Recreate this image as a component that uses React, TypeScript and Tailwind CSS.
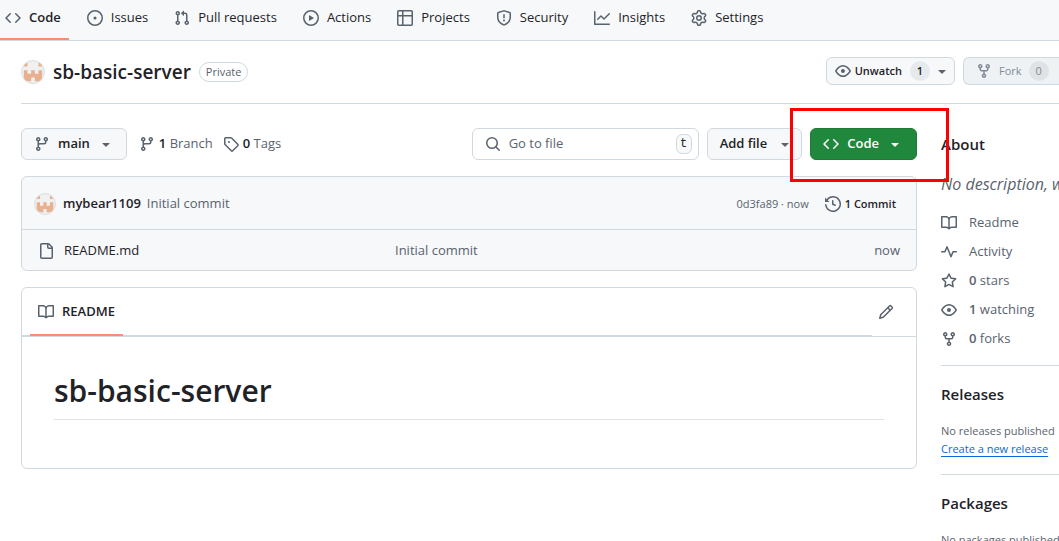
import type { ReactNode } from "react";

const icons = {
  code: "m11.28 3.22 4.25 4.25a.75.75 0 0 1 0 1.06l-4.25 4.25a.749.749 0 0 1-1.275-.326.749.749 0 0 1 .215-.734L13.94 8l-3.72-3.72a.749.749 0 0 1 .326-1.275.749.749 0 0 1 .734.215Zm-6.56 0a.751.751 0 0 1 1.042.018.751.751 0 0 1 .018 1.042L2.06 8l3.72 3.72a.749.749 0 0 1-.326 1.275.749.749 0 0 1-.734-.215L.47 8.53a.75.75 0 0 1 0-1.06Z",
  issue: "M8 9.5a1.5 1.5 0 1 0 0-3 1.5 1.5 0 0 0 0 3ZM8 0a8 8 0 1 1 0 16A8 8 0 0 1 8 0ZM1.5 8a6.5 6.5 0 1 0 13 0 6.5 6.5 0 0 0-13 0Z",
  pull: "M1.5 3.25a2.25 2.25 0 1 1 3 2.122v5.256a2.251 2.251 0 1 1-1.5 0V5.372A2.25 2.25 0 0 1 1.5 3.25Zm5.677-.177L9.573.677A.25.25 0 0 1 10 .854V2.5h1A2.5 2.5 0 0 1 13.5 5v5.628a2.251 2.251 0 1 1-1.5 0V5a1 1 0 0 0-1-1h-1v1.646a.25.25 0 0 1-.427.177L7.177 3.427a.25.25 0 0 1 0-.354ZM3.75 2.5a.75.75 0 1 0 0 1.5.75.75 0 0 0 0-1.5Zm0 9.5a.75.75 0 1 0 0 1.5.75.75 0 0 0 0-1.5Zm8.25.75a.75.75 0 1 0 1.5 0 .75.75 0 0 0-1.5 0Z",
  play: "M8 0a8 8 0 1 1 0 16A8 8 0 0 1 8 0ZM1.5 8a6.5 6.5 0 1 0 13 0 6.5 6.5 0 0 0-13 0Zm4.879-2.773 4.264 2.559a.25.25 0 0 1 0 .428l-4.264 2.559A.25.25 0 0 1 6 10.559V5.442a.25.25 0 0 1 .379-.215Z",
  table: "M0 1.75C0 .784.784 0 1.75 0h12.5C15.216 0 16 .784 16 1.75v12.5A1.75 1.75 0 0 1 14.25 16H1.75A1.75 1.75 0 0 1 0 14.25ZM6.5 6.5v8h7.75a.25.25 0 0 0 .25-.25V6.5Zm8-1.5V1.75a.25.25 0 0 0-.25-.25H6.5V5Zm-13 1.5v7.75c0 .138.112.25.25.25H5v-8ZM5 5V1.5H1.75a.25.25 0 0 0-.25.25V5Z",
  shield: "M7.467.133a1.748 1.748 0 0 1 1.066 0l5.25 1.68A1.75 1.75 0 0 1 15 3.48V7c0 1.566-.32 3.182-1.303 4.682-.983 1.498-2.585 2.813-5.032 3.855a1.697 1.697 0 0 1-1.33 0c-2.447-1.042-4.049-2.357-5.032-3.855C1.32 10.182 1 8.566 1 7V3.48a1.75 1.75 0 0 1 1.217-1.667Zm.61 1.429a.25.25 0 0 0-.153 0l-5.25 1.68a.25.25 0 0 0-.174.238V7c0 1.358.275 2.666 1.057 3.86.784 1.194 2.121 2.34 4.366 3.297a.196.196 0 0 0 .154 0c2.245-.956 3.582-2.104 4.366-3.298C13.225 9.666 13.5 8.36 13.5 7V3.48a.251.251 0 0 0-.174-.237l-5.25-1.68ZM8.75 4.75v3a.75.75 0 0 1-1.5 0v-3a.75.75 0 0 1 1.5 0ZM9 10.5a1 1 0 1 1-2 0 1 1 0 0 1 2 0Z",
  graph: "M1.5 1.75V13.5h13.75a.75.75 0 0 1 0 1.5H.75a.75.75 0 0 1-.75-.75V1.75a.75.75 0 0 1 1.5 0Zm14.28 2.53-5.25 5.25a.75.75 0 0 1-1.06 0L7 7.06 4.28 9.78a.751.751 0 0 1-1.042-.018.751.751 0 0 1-.018-1.042l3.25-3.25a.75.75 0 0 1 1.06 0L10 7.94l4.72-4.72a.751.751 0 0 1 1.042.018.751.751 0 0 1 .018 1.042Z",
  gear: "M8 0a8.2 8.2 0 0 1 .701.031C9.444.095 9.99.645 10.16 1.29l.288 1.107c.018.066.079.158.212.224.231.114.454.243.668.386.123.082.233.09.299.071l1.103-.303c.644-.176 1.392.021 1.82.63.27.385.506.792.704 1.218.315.675.111 1.422-.364 1.891l-.814.806c-.049.048-.098.147-.088.294.016.257.016.515 0 .772-.01.147.038.246.088.294l.814.806c.475.469.679 1.216.364 1.891a7.977 7.977 0 0 1-.704 1.217c-.428.61-1.176.807-1.82.63l-1.102-.302c-.067-.019-.177-.011-.3.071a5.909 5.909 0 0 1-.668.386c-.133.066-.194.158-.211.224l-.29 1.106c-.168.646-.715 1.196-1.458 1.26a8.006 8.006 0 0 1-1.402 0c-.743-.064-1.289-.614-1.458-1.26l-.289-1.106c-.018-.066-.079-.158-.212-.224a5.738 5.738 0 0 1-.668-.386c-.123-.082-.233-.09-.299-.071l-1.103.303c-.644.176-1.392-.021-1.82-.63a8.12 8.12 0 0 1-.704-1.218c-.315-.675-.111-1.422.363-1.891l.815-.806c.05-.048.098-.147.088-.294a6.214 6.214 0 0 1 0-.772c.01-.147-.038-.246-.088-.294l-.815-.806C.635 6.045.431 5.298.746 4.623a7.92 7.92 0 0 1 .704-1.217c.428-.61 1.176-.807 1.82-.63l1.102.302c.067.019.177.011.3-.071.214-.143.437-.272.668-.386.133-.066.194-.158.211-.224l.29-1.106C6.009.645 6.556.095 7.299.03 7.53.01 7.764 0 8 0Zm-.571 1.525c-.036.003-.108.036-.137.146l-.289 1.105c-.147.561-.549.967-.998 1.189-.173.086-.34.183-.5.29-.417.278-.97.423-1.529.27l-1.103-.303c-.109-.03-.175.016-.195.045-.22.312-.412.644-.573.99-.014.031-.021.11.059.19l.815.806c.411.406.562.957.53 1.456a4.709 4.709 0 0 0 0 .582c.032.499-.119 1.05-.53 1.456l-.815.806c-.081.08-.073.159-.059.19.162.346.353.677.573.989.02.03.085.076.195.046l1.102-.303c.56-.153 1.113-.008 1.53.27.161.107.328.204.501.29.447.222.85.629.997 1.189l.289 1.105c.029.109.101.143.137.146a6.6 6.6 0 0 0 1.142 0c.036-.003.108-.036.137-.146l.289-1.105c.147-.561.549-.967.998-1.189.173-.086.34-.183.5-.29.417-.278.97-.423 1.529-.27l1.103.303c.109.029.175-.016.195-.045.22-.313.411-.644.573-.99.014-.031.021-.11-.059-.19l-.815-.806c-.411-.406-.562-.957-.53-1.456a4.709 4.709 0 0 0 0-.582c-.032-.499.119-1.05.53-1.456l.815-.806c.081-.08.073-.159.059-.19a6.464 6.464 0 0 0-.573-.989c-.02-.03-.085-.076-.195-.046l-1.102.303c-.56.153-1.113.008-1.53-.27a4.44 4.44 0 0 0-.501-.29c-.447-.222-.85-.629-.997-1.189l-.289-1.105c-.029-.11-.101-.143-.137-.146a6.6 6.6 0 0 0-1.142 0ZM11 8a3 3 0 1 1-6 0 3 3 0 0 1 6 0ZM9.5 8a1.5 1.5 0 1 0-3.001.001A1.5 1.5 0 0 0 9.5 8Z",
  eye: "M8 2c1.981 0 3.671.992 4.933 2.078 1.27 1.091 2.187 2.345 2.637 3.023a1.62 1.62 0 0 1 0 1.798c-.45.678-1.367 1.932-2.637 3.023C11.67 13.008 9.981 14 8 14c-1.981 0-3.671-.992-4.933-2.078C1.797 10.83.88 9.576.43 8.898a1.62 1.62 0 0 1 0-1.798c.45-.677 1.367-1.931 2.637-3.022C4.33 2.992 6.019 2 8 2ZM1.679 7.932a.12.12 0 0 0 0 .136c.411.622 1.241 1.75 2.366 2.717C5.176 11.758 6.527 12.5 8 12.5c1.473 0 2.825-.742 3.955-1.715 1.124-.967 1.954-2.096 2.366-2.717a.12.12 0 0 0 0-.136c-.412-.621-1.242-1.75-2.366-2.717C10.824 4.242 9.473 3.5 8 3.5c-1.473 0-2.825.742-3.955 1.715-1.124.967-1.954 2.096-2.366 2.717ZM8 10a2 2 0 1 1-.001-3.999A2 2 0 0 1 8 10Z",
  fork: "M5 5.372v.878c0 .414.336.75.75.75h4.5a.75.75 0 0 0 .75-.75v-.878a2.25 2.25 0 1 1 1.5 0v.878a2.25 2.25 0 0 1-2.25 2.25h-1.5v2.128a2.251 2.251 0 1 1-1.5 0V8.5h-1.5A2.25 2.25 0 0 1 3.5 6.25v-.878a2.25 2.25 0 1 1 1.5 0ZM5 3.25a.75.75 0 1 0-1.5 0 .75.75 0 0 0 1.5 0Zm6.75.75a.75.75 0 1 0 0-1.5.75.75 0 0 0 0 1.5Zm-3 8.75a.75.75 0 1 0-1.5 0 .75.75 0 0 0 1.5 0Z",
  branch: "M9.5 3.25a2.25 2.25 0 1 1 3 2.122V6A2.5 2.5 0 0 1 10 8.5H6a1 1 0 0 0-1 1v1.128a2.251 2.251 0 1 1-1.5 0V5.372a2.25 2.25 0 1 1 1.5 0v1.836A2.493 2.493 0 0 1 6 7h4a1 1 0 0 0 1-1v-.628A2.25 2.25 0 0 1 9.5 3.25Zm-6 0a.75.75 0 1 0 1.5 0 .75.75 0 0 0-1.5 0Zm8.25-.75a.75.75 0 1 0 0 1.5.75.75 0 0 0 0-1.5ZM4.25 12a.75.75 0 1 0 0 1.5.75.75 0 0 0 0-1.5Z",
  tag: "M1 7.775V2.75C1 1.784 1.784 1 2.75 1h5.025c.464 0 .91.184 1.238.513l6.25 6.25a1.75 1.75 0 0 1 0 2.474l-5.026 5.026a1.75 1.75 0 0 1-2.474 0l-6.25-6.25A1.752 1.752 0 0 1 1 7.775Zm1.5 0c0 .066.026.13.073.177l6.25 6.25a.25.25 0 0 0 .354 0l5.025-5.025a.25.25 0 0 0 0-.354l-6.25-6.25a.25.25 0 0 0-.177-.073H2.75a.25.25 0 0 0-.25.25ZM6 5a1 1 0 1 1 0 2 1 1 0 0 1 0-2Z",
  search: "M10.68 11.74a6 6 0 0 1-7.922-8.982 6 6 0 0 1 8.982 7.922l3.04 3.04a.749.749 0 0 1-.326 1.275.749.749 0 0 1-.734-.215ZM11.5 7a4.499 4.499 0 1 0-8.997 0A4.499 4.499 0 0 0 11.5 7Z",
  caret: "m4.427 7.427 3.396 3.396a.25.25 0 0 0 .354 0l3.396-3.396A.25.25 0 0 0 11.396 7H4.604a.25.25 0 0 0-.177.427Z",
  history: "m.427 1.927 1.215 1.215a8.002 8.002 0 1 1-1.6 5.685.75.75 0 1 1 1.493-.154 6.5 6.5 0 1 0 1.18-4.458l1.358 1.358A.25.25 0 0 1 3.896 6H.25A.25.25 0 0 1 0 5.75V2.104a.25.25 0 0 1 .427-.177ZM7.75 4a.75.75 0 0 1 .75.75v2.992l2.028.812a.75.75 0 0 1-.557 1.392l-2.5-1A.751.751 0 0 1 7 8.25v-3.5A.75.75 0 0 1 7.75 4Z",
  file: "M2 1.75C2 .784 2.784 0 3.75 0h6.586c.464 0 .909.184 1.237.513l2.914 2.914c.329.328.513.773.513 1.237v9.586A1.75 1.75 0 0 1 13.25 16h-9.5A1.75 1.75 0 0 1 2 14.25Zm1.75-.25a.25.25 0 0 0-.25.25v12.5c0 .138.112.25.25.25h9.5a.25.25 0 0 0 .25-.25V6h-2.75A1.75 1.75 0 0 1 9 4.25V1.5Zm6.75.062V4.25c0 .138.112.25.25.25h2.688l-.011-.013-2.914-2.914-.013-.011Z",
  book: "M0 1.75A.75.75 0 0 1 .75 1h4.253c1.227 0 2.317.59 3 1.501A3.743 3.743 0 0 1 11.006 1h4.245a.75.75 0 0 1 .75.75v10.5a.75.75 0 0 1-.75.75h-4.507a2.25 2.25 0 0 0-1.591.659l-.622.621a.75.75 0 0 1-1.06 0l-.622-.621A2.25 2.25 0 0 0 5.258 13H.75a.75.75 0 0 1-.75-.75Zm7.251 10.324.004-5.073-.002-2.253A2.25 2.25 0 0 0 5.003 2.5H1.5v9h3.757a3.75 3.75 0 0 1 1.994.574ZM8.755 4.75l-.004 7.322a3.752 3.752 0 0 1 1.992-.572H14.5v-9h-3.495a2.25 2.25 0 0 0-2.25 2.25Z",
  pencil: "M11.013 1.427a1.75 1.75 0 0 1 2.474 0l1.086 1.086a1.75 1.75 0 0 1 0 2.474l-8.61 8.61c-.21.21-.47.364-.756.445l-3.251.93a.75.75 0 0 1-.927-.928l.929-3.25c.081-.286.235-.547.445-.758l8.61-8.61Zm.176 4.823L9.75 4.81l-6.286 6.287a.253.253 0 0 0-.064.108l-.558 1.953 1.953-.558a.253.253 0 0 0 .108-.064Zm1.238-3.763a.25.25 0 0 0-.354 0L10.811 3.75l1.439 1.44 1.263-1.263a.25.25 0 0 0 0-.354Z",
  pulse: "M6 2c.306 0 .582.187.696.471L10 10.731l1.304-3.26A.751.751 0 0 1 12 7h3.25a.75.75 0 0 1 0 1.5h-2.742l-1.812 4.528a.751.751 0 0 1-1.392 0L6 4.77 4.696 8.03A.75.75 0 0 1 4 8.5H.75a.75.75 0 0 1 0-1.5h2.742l1.812-4.529A.751.751 0 0 1 6 2Z",
  star: "M8 .25a.75.75 0 0 1 .673.418l1.882 3.815 4.21.612a.75.75 0 0 1 .416 1.279l-3.046 2.97.719 4.192a.751.751 0 0 1-1.088.791L8 12.347l-3.766 1.98a.75.75 0 0 1-1.088-.79l.72-4.194L.818 6.374a.75.75 0 0 1 .416-1.28l4.21-.611L7.327.668A.75.75 0 0 1 8 .25Zm0 2.445L6.615 5.5a.75.75 0 0 1-.564.41l-3.097.45 2.24 2.184a.75.75 0 0 1 .216.664l-.528 3.084 2.769-1.456a.75.75 0 0 1 .698 0l2.77 1.456-.53-3.084a.75.75 0 0 1 .216-.664l2.24-2.183-3.096-.45a.75.75 0 0 1-.564-.41L8 2.694Z",
};

type IconName = keyof typeof icons;

function Icon({ name, className = "text-[#59636e]" }: { name: IconName; className?: string }) {
  return (
    <svg viewBox="0 0 16 16" fill="currentColor" aria-hidden="true" className={`h-4 w-4 shrink-0 ${className}`}>
      <path d={icons[name]} />
    </svg>
  );
}

function Avatar({ className }: { className: string }) {
  return (
    <svg viewBox="0 0 24 24" aria-hidden="true" className={`shrink-0 rounded-full border border-[#dcdfe3] bg-[#f0f0f0] ${className}`}>
      <path
        fill="#e8b08f"
        d="M2 2h4v4H2zM18 2h4v4h-4zM2 10h4v4h4v-4h4v4h4v-4h4v12h-8v-4h-4v4H2z"
      />
    </svg>
  );
}

const tabs: { label: string; icon: IconName }[] = [
  { label: "Issues", icon: "issue" },
  { label: "Pull requests", icon: "pull" },
  { label: "Actions", icon: "play" },
  { label: "Projects", icon: "table" },
  { label: "Security", icon: "shield" },
  { label: "Insights", icon: "graph" },
  { label: "Settings", icon: "gear" },
];

const stats: { icon: IconName; count?: number; label: string }[] = [
  { icon: "book", label: "Readme" },
  { icon: "pulse", label: "Activity" },
  { icon: "star", count: 0, label: "stars" },
  { icon: "eye", count: 1, label: "watching" },
  { icon: "fork", count: 0, label: "forks" },
];

function RepoNav() {
  return (
    <nav className="flex h-[41px] gap-[10px] overflow-hidden border-b border-[#d1d9e0] bg-[#f6f8fa]">
      <a href="#code" className="flex items-center gap-2 border-b-2 border-[#fd8c73] pr-2 pb-[3px] pl-[5px] font-semibold">
        <Icon name="code" />
        Code
      </a>
      {tabs.map((tab) => (
        <a key={tab.label} href="#tab" className="flex items-center gap-2 border-b-2 border-transparent px-2 pb-[3px] whitespace-nowrap">
          <Icon name={tab.icon} />
          {tab.label}
        </a>
      ))}
    </nav>
  );
}

function RepoHeader() {
  return (
    <header className="ml-[21px] flex items-start border-b border-[#d1d9e0] pt-4 pb-4">
      <div className="flex h-[30px] items-center gap-2">
        <Avatar className="h-6 w-6" />
        <a href="#repo" className="text-[19px] leading-[30px] font-semibold">sb-basic-server</a>
        <span className="rounded-full border border-[#d1d9e0] px-[6px] text-[11px] leading-[18px] font-medium text-[#59636e]">
          Private
        </span>
      </div>
      <div className="ml-auto flex gap-2 text-[11px] font-medium">
        <button className="flex h-7 items-center gap-1 rounded-md border border-[#d1d9e0] bg-[#f6f8fa] pr-1 pl-2 font-semibold">
          <Icon name="eye" />
          Unwatch
          <span className="ml-1 h-5 w-5 rounded-full bg-[#e7eaed] text-center leading-5">1</span>
          <Icon name="caret" />
        </button>
        <button disabled className="flex h-7 w-24 items-center gap-[7px] rounded-l-md border border-r-0 border-[#d1d9e0] bg-[#eff2f5] pl-3 text-[#818b98]">
          <Icon name="fork" className="text-[#818b98]" />
          Fork
          <span className="h-5 w-5 rounded-full bg-[#e0e3e6] text-center leading-5">0</span>
        </button>
      </div>
    </header>
  );
}

function Toolbar() {
  return (
    <div className="flex h-8 items-center">
      <button className="flex h-8 items-center gap-2 rounded-md border border-[#d1d9e0] bg-[#f6f8fa] px-3 font-semibold">
        <Icon name="branch" />
        main
        <Icon name="caret" />
      </button>
      <a href="#branches" className="ml-3 flex items-center gap-1 font-medium text-[#59636e]">
        <Icon name="branch" />
        <span><b className="font-semibold text-[#1f2328]">1</b> Branch</span>
      </a>
      <a href="#tags" className="ml-[10px] flex items-center gap-1 font-medium text-[#59636e]">
        <Icon name="tag" />
        <span><b className="font-semibold text-[#1f2328]">0</b> Tags</span>
      </a>
      <div className="ml-auto flex gap-2">
        <label className="flex h-8 w-[227px] items-center gap-2 rounded-md border border-[#d1d9e0] px-3 pr-[6px]">
          <Icon name="search" />
          <input aria-label="Go to file" placeholder="Go to file" className="min-w-0 flex-1 outline-none placeholder:text-[#59636e]" />
          <kbd className="h-5 w-4 rounded-md border border-[#d1d9e0] bg-[#f6f8fa] text-center font-['Liberation_Mono',monospace] text-xs leading-[18px]">t</kbd>
        </label>
        <button className="flex h-8 items-center gap-[10px] rounded-md border border-[#d1d9e0] bg-[#f6f8fa] pr-2 pl-3 font-semibold">
          Add file
          <Icon name="caret" />
        </button>
        <div className="relative">
          <button className="flex h-8 items-center gap-2 rounded-md border border-[#1f7a38] bg-[#1f883d] pr-[13px] pl-3 font-semibold text-white">
            <Icon name="code" className="text-white" />
            Code
            <Icon name="caret" className="text-white" />
          </button>
          <div className="pointer-events-none absolute -top-5 -right-8 -bottom-[22px] -left-5 z-10 border-3 border-[#ff0000]" />
        </div>
      </div>
    </div>
  );
}

function FileList() {
  return (
    <section className="mt-4 rounded-md border border-[#d1d9e0] bg-[#f6f8fa]">
      <div className="flex h-[53px] items-center border-b border-[#d1d9e0] pt-[2px] pr-5 pl-3">
        <Avatar className="h-[22px] w-[22px]" />
        <a href="#author" className="ml-[7px] font-semibold">mybear1109</a>
        <a href="#commit" className="ml-[6px] text-[#59636e]">Initial commit</a>
        <span className="ml-auto text-[11px] text-[#59636e]">0d3fa89 · now</span>
        <a href="#history" className="ml-4 flex items-center gap-1 text-[11px] font-semibold">
          <Icon name="history" />
          1 Commit
        </a>
      </div>
      <table className="w-full table-fixed">
        <tbody>
          <tr className="h-10">
            <td className="w-[373px] pt-[2px] pl-4">
              <a href="#readme" className="flex items-center gap-[10px]">
                <Icon name="file" />
                README.md
              </a>
            </td>
            <td className="pt-[2px] text-[#59636e]">Initial commit</td>
            <td className="w-[136px] pt-[2px] pr-4 text-right text-[#59636e]">now</td>
          </tr>
        </tbody>
      </table>
    </section>
  );
}

function Readme() {
  return (
    <section className="mt-4 rounded-md border border-[#d1d9e0]">
      <div className="flex h-[49px] border-b border-[#d1d9e0] pr-[22px]">
        <nav className="mr-[6px] flex flex-1 pl-2 shadow-[inset_0_-1px_0_#d1d9e0]">
          <a href="#readme" className="flex items-center gap-2 border-b-2 border-[#fd8c73] px-2 pt-[2px] font-semibold">
            <Icon name="book" />
            README
          </a>
        </nav>
        <button aria-label="Edit file">
          <Icon name="pencil" />
        </button>
      </div>
      <div className="p-8 pb-12">
        <h1 className="border-b border-[#dfe4e9] pt-[2px] pb-2 text-[30px] leading-10 font-semibold">sb-basic-server</h1>
      </div>
    </section>
  );
}

function SideSection({ title, children }: { title: string; children: ReactNode }) {
  return (
    <section className="mt-4 border-t border-[#d1d9e0] pt-4 text-[11px] leading-[18px] text-[#59636e]">
      <h2 className="mb-4 text-[15px] leading-6 font-semibold text-[#1f2328]">{title}</h2>
      {children}
    </section>
  );
}

function Sidebar() {
  return (
    <aside className="w-[118px] shrink-0 overflow-hidden whitespace-nowrap">
      <h2 className="mb-3 text-[15px] leading-8 font-semibold">About</h2>
      <p className="mb-4 text-base leading-6 text-[#59636e] italic">No description, website, or topics provided.</p>
      <ul className="flex flex-col gap-2">
        {stats.map((stat) => (
          <li key={stat.label}>
            <a href="#stat" className="flex items-center gap-3 leading-[21px] text-[#59636e]">
              <Icon name={stat.icon} />
              <span>
                {stat.count !== undefined && <b className="font-semibold">{stat.count} </b>}
                {stat.label}
              </span>
            </a>
          </li>
        ))}
      </ul>
      <SideSection title="Releases">
        <p>No releases published</p>
        <a href="#release" className="text-[#0969da] underline underline-offset-3">Create a new release</a>
      </SideSection>
      <SideSection title="Packages">
        <p>No packages published</p>
      </SideSection>
    </aside>
  );
}

export default function App() {
  return (
    <div className="h-screen overflow-hidden bg-white font-['Open_Sans','Noto_Sans',sans-serif] text-[13px] text-[#1f2328]">
      <RepoNav />
      <RepoHeader />
      <div className="flex gap-6 pt-6 pl-[21px]">
        <main className="min-w-0 flex-1">
          <Toolbar />
          <FileList />
          <Readme />
        </main>
        <Sidebar />
      </div>
    </div>
  );
}
